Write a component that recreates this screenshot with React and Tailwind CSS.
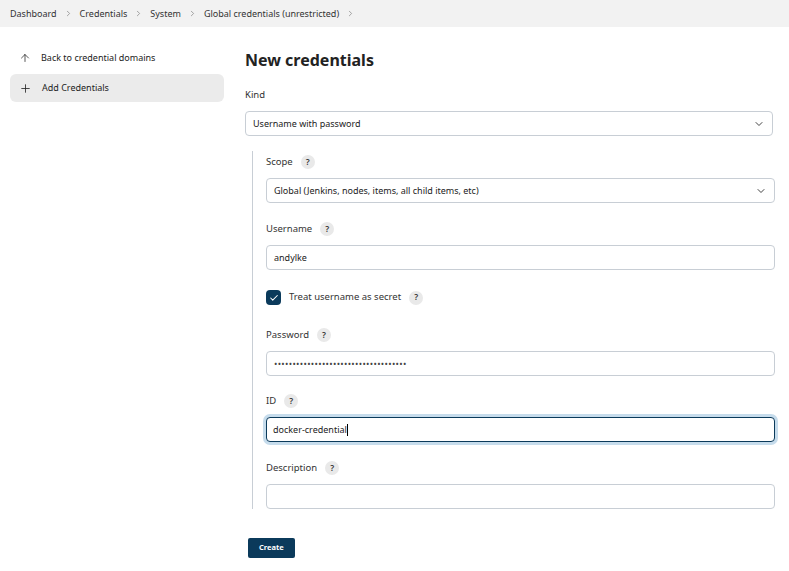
import { ArrowUp, Plus, ChevronDown, ChevronRight, Check } from "lucide-react";

function Help() {
  return (
    <span className="inline-flex items-center justify-center w-[14px] h-[14px] rounded-full bg-[#e9e9e9] text-[8.5px] font-semibold text-[#333] ml-[8px]">
      ?
    </span>
  );
}

function Label({ children, help = true }) {
  return (
    <div className="flex items-center h-[16px] text-[9.5px] text-[#333]">
      {children}
      {help && <Help />}
    </div>
  );
}

function Select({ value }) {
  return (
    <div className="flex items-center justify-between h-[25px] border border-[#c8ced5] rounded-[4px] px-[7px] text-[9px] text-[#222] bg-white">
      <span>{value}</span>
      <ChevronDown size={12} strokeWidth={2} className="text-[#444]" />
    </div>
  );
}

function Input({ value, focus, password }) {
  return (
    <div
      className={
        focus
          ? "flex items-center h-[25px] border-[1.5px] border-[#0b3a5b] rounded-[4px] px-[6px] text-[9px] text-[#222] bg-white ring-[3px] ring-[#c6dcec]"
          : "flex items-center h-[25px] border border-[#c8ced5] rounded-[4px] px-[7px] text-[9px] text-[#222] bg-white"
      }
    >
      {password ? (
        <span className="tracking-[0.3px] text-[#444] text-[9px]">{"•".repeat(36)}</span>
      ) : (
        <span>{value}</span>
      )}
      {focus && <span className="w-px h-[12px] bg-black" />}
    </div>
  );
}

export default function App() {
  const crumbs = ["Dashboard", "Credentials", "System", "Global credentials (unrestricted)"];
  return (
    <div className="w-[789px] h-[571px] bg-white overflow-hidden" style={{ fontFamily: '"Noto Sans", "Open Sans", sans-serif' }}>
      <div className="h-[27px] bg-[#f2f2f2] flex items-center pl-[10px] text-[9px] text-[#333]">
        {crumbs.map((c) => (
          <span key={c} className="flex items-center">
            <span>{c}</span>
            <ChevronRight size={9} className="mx-[7px] text-[#888]" />
          </span>
        ))}
      </div>

      <div className="flex">
        <div className="w-[214px] ml-[10px] mt-[17px] flex flex-col gap-[2px]">
          <div className="flex items-center h-[28px] px-[9px] text-[9px] text-[#222]">
            <ArrowUp size={12} strokeWidth={1.5} className="mr-[10px]" />
            Back to credential domains
          </div>
          <div className="flex items-center h-[28px] px-[9px] text-[9px] text-[#222] bg-[#ebebeb] rounded-[6px]">
            <Plus size={13} strokeWidth={1.5} className="mr-[10px]" />
            Add Credentials
          </div>
        </div>

        <div className="ml-[21px] w-[528px]">
          <h1 className="mt-[22px] text-[16px] font-bold text-[#222] leading-[22px]">New credentials</h1>
          <div className="mt-[16px]">
            <Label help={false}>Kind</Label>
          </div>
          <div className="mt-[8px]">
            <Select value="Username with password" />
          </div>

          <div className="mt-[15px] ml-[7px] border-l border-[#c8ced5] pl-[13px] pt-[3px] w-[523px]">
            <Label>Scope</Label>
            <div className="mt-[8px]">
              <Select value="Global (Jenkins, nodes, items, all child items, etc)" />
            </div>

            <div className="mt-[18px]">
              <Label>Username</Label>
            </div>
            <div className="mt-[8px]">
              <Input value="andylke" />
            </div>

            <div className="mt-[20px] flex items-center text-[9.5px] text-[#333]">
              <span className="w-[15px] h-[15px] rounded-[4px] bg-[#0b3a5b] flex items-center justify-center mr-[8px]">
                <Check size={10} strokeWidth={2.5} className="text-white" />
              </span>
              Treat username as secret
              <Help />
            </div>

            <div className="mt-[22px]">
              <Label>Password</Label>
            </div>
            <div className="mt-[8px]">
              <Input password />
            </div>

            <div className="mt-[17px]">
              <Label>ID</Label>
            </div>
            <div className="mt-[8px]">
              <Input value="docker-credential" focus />
            </div>

            <div className="mt-[18px]">
              <Label>Description</Label>
            </div>
            <div className="mt-[8px]">
              <Input value="" />
            </div>
          </div>

          <div className="mt-[23px] ml-[3px]">
            <button className="h-[20px] px-[11px] bg-[#0b3a5b] text-white text-[7.5px] font-bold rounded-[2px]">
              Create
            </button>
          </div>
        </div>
      </div>
    </div>
  );
}
